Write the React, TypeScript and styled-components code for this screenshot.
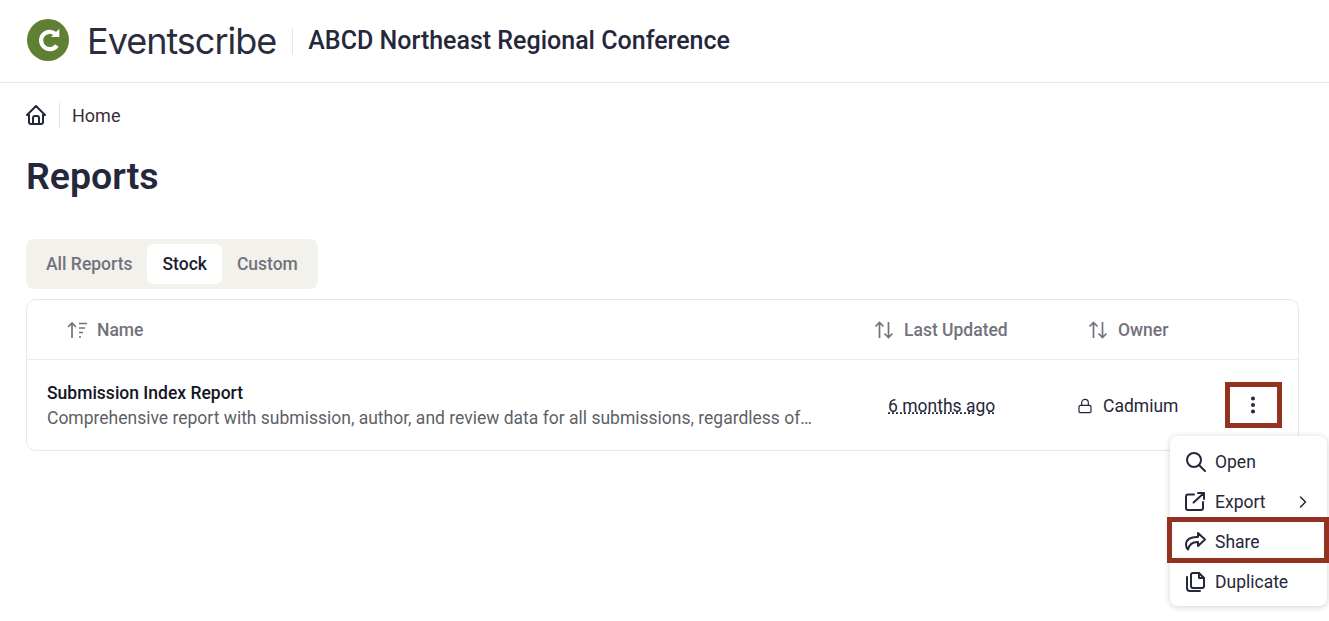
import styled, { createGlobalStyle } from "styled-components";
import { ChevronRight, Lock, MoreVertical } from "lucide-react";
import { TbHome, TbSearch } from "react-icons/tb";
import type { ReactNode } from "react";

const GlobalStyle = createGlobalStyle`
    html, body {
        margin: 0;
        padding: 0;
        background: #fff;
        font-family: Roboto, "Liberation Sans", sans-serif;
        color: #25273a;
        overflow: hidden;
    }
`;

const Page = styled.div`
    position: relative;
    width: 1329px;
    height: 621px;
    overflow: hidden;
`;

const Header = styled.header`
    height: 82px;
    display: flex;
    align-items: center;
    padding-left: 26px;
    border-bottom: 1px solid #e6e6e6;
`;

const Brand = styled.span`
    margin-left: 17px;
    font-family: Inter, sans-serif;
    font-size: 36px;
    letter-spacing: -1px;
    color: #2b2d3f;
`;

const Conference = styled.h2`
    margin: 0 0 0 16px;
    padding-left: 15px;
    border-left: 1px solid #e6e6e6;
    font-size: 25px;
    line-height: 26px;
    font-weight: 500;
    color: #25273a;
`;

const Main = styled.main`
    padding: 19px 30px 0 26px;
`;

const Crumbs = styled.nav`
    display: flex;
    align-items: center;
    height: 26px;
    font-size: 18px;
    color: #3b2c3a;
`;

const CrumbHome = styled.span`
    display: flex;
    width: 35px;
    height: 25px;
    align-items: center;
    border-right: 1px solid #e2e2e2;
    margin: 0 12px 0 -2px;
    color: #25273a;
`;

const Title = styled.h1`
    margin: 26px 0 41px;
    font-size: 37.5px;
    line-height: 44px;
    font-weight: 600;
    color: #25273a;
`;

const TabBar = styled.div`
    display: inline-flex;
    height: 40px;
    padding: 5px;
    background: #f3f1ec;
    border-radius: 8px;
    margin-bottom: 10px;
    vertical-align: top;
`;

const Tab = styled.div<{ $active?: boolean }>`
    display: flex;
    align-items: center;
    padding: 0 15px;
    font-size: 17.5px;
    font-weight: 500;
    color: ${(p) => (p.$active ? "#1c1e2e" : "#72727c")};
    background: ${(p) => (p.$active ? "#fff" : "transparent")};
    border-radius: 6px;
`;

const Card = styled.section`
    border: 1px solid #e8e8e8;
    border-radius: 10px;
`;

const Row = styled.div`
    display: grid;
    grid-template-columns: 846px 199px 1fr;
    align-items: center;
`;

const HeadRow = styled(Row)`
    height: 59px;
    border-bottom: 1px solid #ececec;
`;

const HeadCell = styled.div<{ $pad: number }>`
    display: flex;
    align-items: center;
    gap: 10px;
    padding-left: ${(p) => p.$pad}px;
    font-size: 17.5px;
    font-weight: 500;
    color: #72727c;
`;

const BodyRow = styled(Row)`
    height: 90px;
`;

const NameCell = styled.div`
    padding-left: 20px;
`;

const ReportName = styled.div`
    font-size: 17.5px;
    line-height: 25px;
    font-weight: 500;
    color: #14151f;
`;

const ReportDesc = styled.div`
    font-size: 17.5px;
    line-height: 24px;
    color: #5f5f68;
    white-space: nowrap;
`;

const UpdatedCell = styled.div`
    padding: 2px 0 0 15px;
`;

const Updated = styled.span`
    font-size: 17.5px;
    color: #25273a;
    text-decoration: underline dotted #25273a;
    text-underline-offset: 1px;
`;

const OwnerCell = styled.div`
    display: flex;
    align-items: center;
    padding-left: 5px;
    font-size: 17.5px;
    color: #25273a;
`;

const OwnerLock = styled.span`
    display: flex;
    padding-top: 2px;
`;

const OwnerName = styled.span`
    margin-left: 10px;
    padding-top: 2px;
`;

const MoreButton = styled.div`
    display: flex;
    align-items: center;
    justify-content: center;
    width: 45px;
    height: 36px;
    padding-right: 2px;
    margin-left: 47px;
    border: 5px solid #943222;
`;

const Menu = styled.div`
    position: absolute;
    left: 1170px;
    top: 436px;
    width: 157px;
    height: 170px;
    padding: 6px 0;
    box-sizing: border-box;
    background: #fff;
    border-radius: 8px;
    box-shadow: 0 1px 6px rgba(30, 30, 40, 0.2);
`;

const MenuItem = styled.div<{ $marked?: boolean }>`
    position: relative;
    display: flex;
    align-items: center;
    height: 40px;
    padding-left: 14px;
    gap: 7px;
    font-size: 17.5px;
    color: #25273a;

    ${(p) =>
        p.$marked &&
        `
        &::after {
            content: "";
            position: absolute;
            left: -3px;
            right: -2px;
            top: -5px;
            bottom: -1px;
            border: 5px solid #943222;
        }
    `}
`;

const MenuArrow = styled.span`
    display: flex;
    margin-left: auto;
    margin-right: 14px;
`;

const Logo = () => (
    <svg width="44" height="44" viewBox="0 0 44 44">
        <circle cx="22" cy="21" r="21" fill="#5e7f34" />
        <path d="M30.9 26.5A8.7 8.7 0 1 1 29.4 14.8" fill="none" stroke="#fff" strokeWidth="4.2" />
        <path d="M33.3 9.7V18H25z" fill="#fff" />
    </svg>
);

const SortIcon = () => (
    <svg width="21" height="22" viewBox="0 0 21 22" fill="none" stroke="#72727c" strokeWidth="1.7">
        <path d="M6 19V4M2 8l4-4 4 4M13 4.5h8M13 9h6M13 13.5h4M13 18h2" />
    </svg>
);

const SwapIcon = () => (
    <svg width="20" height="20" viewBox="0 0 20 20" fill="none" stroke="#72727c" strokeWidth="1.7">
        <path d="M5.5 18V2.5M1.5 6.5l4-4 4 4M14.5 2v15.5M10.5 13.5l4 4 4-4" />
    </svg>
);

const MenuSvg = ({ children }: { children: ReactNode }) => (
    <svg width="24" height="24" viewBox="0 0 24 24" fill="none" stroke="currentColor" strokeWidth="2" strokeLinecap="round" strokeLinejoin="round">
        {children}
    </svg>
);

const ExportIcon = () => (
    <MenuSvg>
        <path d="M10 4.5H4a2 2 0 0 0-2 2V18a2 2 0 0 0 2 2h13a2 2 0 0 0 2-2v-6" />
        <path d="M9.5 12.5L20 3M14 3h6v6" />
    </MenuSvg>
);

const ShareIcon = () => (
    <MenuSvg>
        <path d="M14 3L21 9.5L14 16V12C9 11.8 5.5 13.5 4 19.5C2.5 18 2 16 2 14.5C2 9.5 7 6.5 14 7Z" />
    </MenuSvg>
);

const DuplicateIcon = () => (
    <MenuSvg>
        <path d="M9 3h6l5 5v8a2 2 0 0 1-2 2H9a2 2 0 0 1-2-2V5a2 2 0 0 1 2-2z" />
        <path d="M15 3v5h5M3 7v11a3 3 0 0 0 3 3h10" />
    </MenuSvg>
);

const items: { label: string; icon: ReactNode; marked?: boolean }[] = [
    { label: "Open", icon: <TbSearch size={24} /> },
    { label: "Export", icon: <ExportIcon /> },
    { label: "Share", icon: <ShareIcon />, marked: true },
    { label: "Duplicate", icon: <DuplicateIcon /> },
];

export default function App() {
    return (
        <Page>
            <GlobalStyle />
            <Header>
                <Logo />
                <Brand>Eventscribe</Brand>
                <Conference>ABCD Northeast Regional Conference</Conference>
            </Header>
            <Main>
                <Crumbs>
                    <CrumbHome>
                        <TbHome size={24} />
                    </CrumbHome>
                    Home
                </Crumbs>
                <Title>Reports</Title>
                <TabBar>
                    <Tab>All Reports</Tab>
                    <Tab $active>Stock</Tab>
                    <Tab>Custom</Tab>
                </TabBar>
                <Card>
                    <HeadRow>
                        <HeadCell $pad={39}>
                            <SortIcon />
                            Name
                        </HeadCell>
                        <HeadCell $pad={1}>
                            <SwapIcon />
                            Last Updated
                        </HeadCell>
                        <HeadCell $pad={16}>
                            <SwapIcon />
                            Owner
                        </HeadCell>
                    </HeadRow>
                    <BodyRow>
                        <NameCell>
                            <ReportName>Submission Index Report</ReportName>
                            <ReportDesc>
                                Comprehensive report with submission, author, and review data for all submissions, regardless of…
                            </ReportDesc>
                        </NameCell>
                        <UpdatedCell>
                            <Updated>6 months ago</Updated>
                        </UpdatedCell>
                        <OwnerCell>
                            <OwnerLock>
                                <Lock size={16} strokeWidth={1.8} />
                            </OwnerLock>
                            <OwnerName>Cadmium</OwnerName>
                            <MoreButton>
                                <MoreVertical size={22} strokeWidth={2.4} />
                            </MoreButton>
                        </OwnerCell>
                    </BodyRow>
                </Card>
            </Main>
            <Menu>
                {items.map((item) => (
                    <MenuItem key={item.label} $marked={item.marked}>
                        {item.icon}
                        {item.label}
                        {item.label === "Export" && (
                            <MenuArrow>
                                <ChevronRight size={20} strokeWidth={1.8} />
                            </MenuArrow>
                        )}
                    </MenuItem>
                ))}
            </Menu>
        </Page>
    );
}
